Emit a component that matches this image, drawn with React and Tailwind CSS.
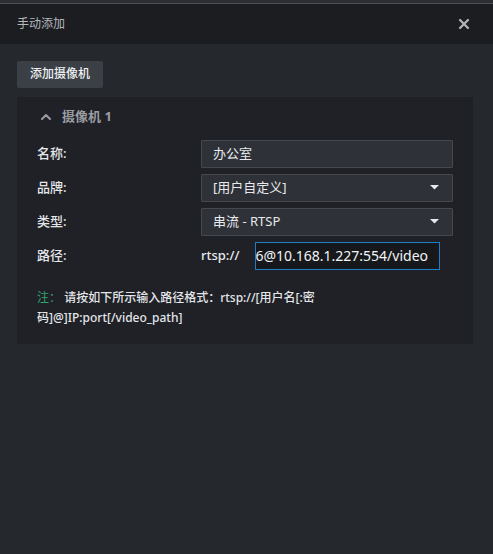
import { ChevronUp, X } from "lucide-react";

const font = { fontFamily: '"Noto Sans", "Noto Sans CJK SC", sans-serif' };

function Caret() {
  return (
    <svg width="9" height="5" viewBox="0 0 9 5" className="text-[#e6e8eb]">
      <path d="M0 0h9L4.5 4.5z" fill="currentColor" />
    </svg>
  );
}

function Row({ label, children }) {
  return (
    <div className="flex items-center h-7">
      <div className="w-[164px] text-[13px] font-medium text-[#e4e6e9]">{label}</div>
      <div className="flex-1 flex">{children}</div>
    </div>
  );
}

export default function App() {
  return (
    <div className="w-[493px] h-[554px] bg-[#25282d] flex flex-col overflow-hidden" style={font}>
      <div className="h-[3px] bg-[#2c2e33]" />
      <div className="h-px bg-[#4a4d52]" />
      <div className="h-10 bg-[#1b1d21] flex items-center justify-between pl-[17px] pr-[21px]">
        <span className="text-[12px] text-[#b4b7bc]">手动添加</span>
        <X size={16} strokeWidth={3.2} className="text-[#b4b7bc]" />
      </div>
      <div className="px-[17px] pt-4">
        <button className="h-[27px] px-[13px] rounded-[2px] bg-[#3b4047] text-[12px] font-medium text-[#eef0f2]">添加摄像机</button>
        <div className="mt-[9px] w-[456px] bg-[#1f2126] pl-5 pr-5 pt-[10px] pb-[16px]">
          <div className="flex items-center gap-[8px] h-5 text-[13px] font-bold text-[#9a9da2]">
            <ChevronUp size={16} strokeWidth={3} className="ml-[1px]" />
            <span>摄像机 1</span>
          </div>
          <div className="mt-[13px] flex flex-col gap-[6px]">
            <Row label="名称:">
              <div className="w-[252px] h-7 bg-[#2e3137] border border-[#45484e] rounded-[1px] flex items-center px-[11px] text-[13px] text-[#e8eaed]">办公室</div>
            </Row>
            <Row label="品牌:">
              <div className="w-[252px] h-7 bg-[#2e3137] border border-[#45484e] rounded-[1px] flex items-center justify-between pl-[11px] pr-[13px] text-[13px] text-[#e8eaed]">
                <span>[用户自定义]</span>
                <Caret />
              </div>
            </Row>
            <Row label="类型:">
              <div className="w-[252px] h-7 bg-[#2e3137] border border-[#45484e] rounded-[1px] flex items-center justify-between pl-[11px] pr-[13px] text-[13px] text-[#e8eaed]">
                <span>串流 - RTSP</span>
                <Caret />
              </div>
            </Row>
            <Row label="路径:">
              <div className="w-[54px] flex items-center text-[13px] font-medium text-[#e8eaed]">rtsp://</div>
              <div className="w-[185px] h-7 bg-[#16181b] border border-[#1f7ec9] flex items-center justify-end overflow-hidden pr-[11px] text-[14px] text-[#f2f4f6] whitespace-nowrap">
                admin:123456@10.168.1.227:554/video
              </div>
            </Row>
          </div>
          <p className="mt-[18px] w-[300px] text-[12px] leading-5 font-medium text-[#e4e6e9]">
            <span className="text-[#2fa36b] font-normal">注：</span> 请按如下所示输入路径格式：rtsp://[用户名[:密码]@]IP:port[/video_path]
          </p>
        </div>
      </div>
    </div>
  );
}
